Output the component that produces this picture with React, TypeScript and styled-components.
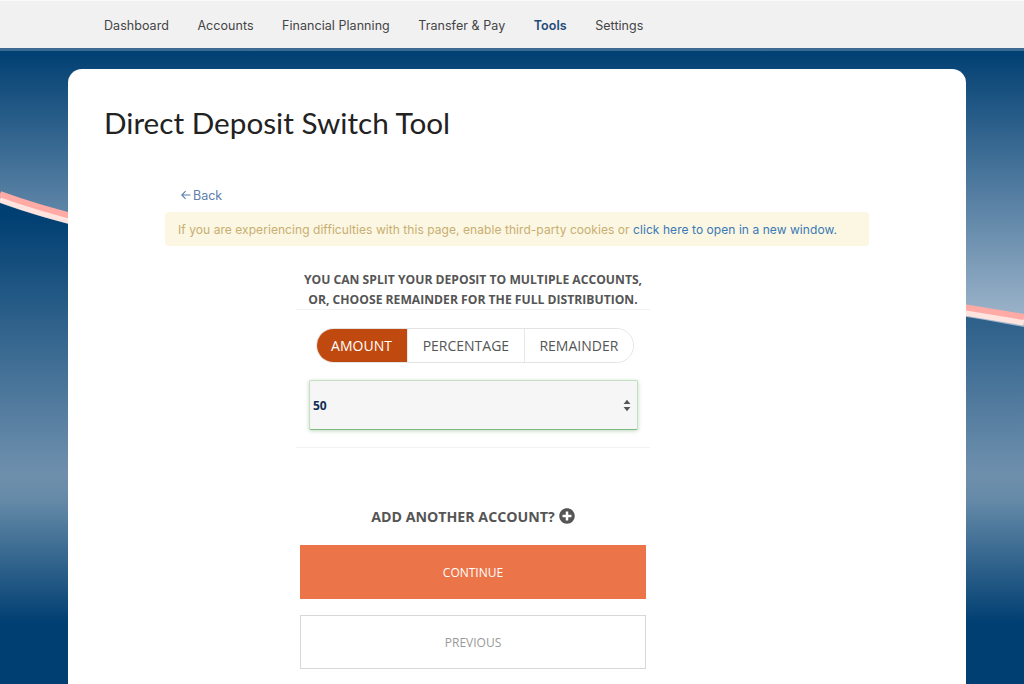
import React from "react";
import styled, { createGlobalStyle } from "styled-components";
import { FaPlusCircle } from "react-icons/fa";

const navItems = ["Dashboard", "Accounts", "Financial Planning", "Transfer & Pay", "Tools", "Settings"];
const modes = ["AMOUNT", "PERCENTAGE", "REMAINDER"];

const App = () => {
  return (
    <Page>
      <GlobalStyle />
      <Backdrop viewBox="0 0 1024 684" preserveAspectRatio="none" aria-hidden="true">
        <defs>
          <linearGradient id="sky" gradientUnits="userSpaceOnUse" x1="0" y1="50" x2="0" y2="330">
            <stop offset="0" stopColor="#003f72" />
            <stop offset="1" stopColor="#a3b9ce" />
          </linearGradient>
          <linearGradient id="sea" gradientUnits="userSpaceOnUse" x1="0" y1="215" x2="0" y2="640">
            <stop offset="0" stopColor="#003f72" />
            <stop offset="0.56" stopColor="#668aa9" />
            <stop offset="0.61" stopColor="#6e8fac" />
            <stop offset="0.67" stopColor="#658aa8" />
            <stop offset="0.96" stopColor="#003f72" />
            <stop offset="1" stopColor="#003f72" />
          </linearGradient>
        </defs>
        <rect width="1024" height="684" fill="url(#sky)" />
        <path d="M0 203 C100 240 300 275 500 280 S850 295 1024 327 V684 H0 Z" fill="url(#sea)" />
        <path d="M0 199 C100 236 300 271 500 276 S850 291 1024 322" fill="none" stroke="#ffe3df" strokeWidth="7" />
        <path d="M0 194 C100 231 300 266 500 271 S850 286 1024 317" fill="none" stroke="#ffaaa5" strokeWidth="6" />
      </Backdrop>

      <Nav>
        {navItems.map((item) => (
          <NavLink key={item} active={item === "Tools"}>
            {item}
          </NavLink>
        ))}
      </Nav>

      <Card>
        <Title>Direct Deposit Switch Tool</Title>

        <Content>
          <Back>
            <svg width="10" height="10" viewBox="0 0 10 10" fill="none" stroke="currentColor" strokeWidth="1.1">
              <path d="M9.5 5H.8M4.6 1.2.8 5l3.8 3.8" />
            </svg>
            Back
          </Back>

          <Alert>
            If you are experiencing difficulties with this page, enable third-party cookies or{" "}
            <AlertLink>click here to open in a new window.</AlertLink>
          </Alert>

          <Form>
            <Heading>
              You can split your deposit to multiple accounts,
              <br />
              or, choose remainder for the full distribution.
            </Heading>
            <Rule />

            <Segments>
              {modes.map((mode) => (
                <Segment key={mode} active={mode === "AMOUNT"}>
                  {mode}
                </Segment>
              ))}
            </Segments>

            <AmountField>
              <span>50</span>
              <svg width="8" height="13" viewBox="0 0 8 13" fill="#555">
                <path d="M4 .8 7.4 5H.6zM4 12.2.6 8h6.8z" />
              </svg>
            </AmountField>
            <Rule />

            <AddAccount>
              Add another account?
              <FaPlusCircle size={16} color="#555" />
            </AddAccount>

            <ContinueButton>CONTINUE</ContinueButton>
            <PreviousButton>PREVIOUS</PreviousButton>
          </Form>
        </Content>
      </Card>
    </Page>
  );
};

const GlobalStyle = createGlobalStyle`
  html, body {
    margin: 0;
    padding: 0;
    background: #003f72;
  }
  * {
    box-sizing: border-box;
  }
`;

const Page = styled.div`
  position: relative;
  height: 684px;
  overflow: hidden;
`;

const Backdrop = styled.svg`
  position: absolute;
  top: 0;
  left: 0;
  width: 100%;
  height: 100%;
`;

const Nav = styled.nav`
  position: relative;
  display: flex;
  align-items: center;
  gap: 28.5px;
  height: 51px;
  padding: 1px 0 0 104px;
  background: #f1f1f2;
  border-top: 1px solid #fafafa;
  border-bottom: 3px solid #3d6a90;
`;

const NavLink = styled.a<{ active?: boolean }>`
  font-family: Inter, sans-serif;
  font-size: 12.5px;
  font-weight: ${(p) => (p.active ? 600 : 400)};
  letter-spacing: 0.05px;
  color: ${(p) => (p.active ? "#1f4a78" : "#444")};
`;

const Card = styled.main`
  position: relative;
  width: 898px;
  height: 640px;
  margin: 18px 0 0 68px;
  padding: 31px 0 0 36px;
  background: #fff;
  border-radius: 14px;
`;

const Title = styled.h1`
  margin: 0;
  font-family: Lato, sans-serif;
  font-size: 29.7px;
  line-height: 46px;
  font-weight: 400;
  color: #222;
`;

const Content = styled.div`
  width: 704px;
  margin: 39px 0 0 61px;
`;

const Back = styled.a`
  display: flex;
  align-items: center;
  gap: 2px;
  height: 20px;
  margin-left: 16px;
  font-family: Inter, sans-serif;
  font-size: 12.5px;
  color: #5c80ab;
`;

const Alert = styled.div`
  height: 34px;
  margin-top: 7px;
  padding-left: 13px;
  font-family: Inter, sans-serif;
  font-size: 12px;
  line-height: 35px;
  letter-spacing: 0.06px;
  white-space: nowrap;
  color: #c9ae70;
  background: #fbf7e3;
  border-radius: 4px;
`;

const AlertLink = styled.a`
  color: #3a78b5;
`;

const Form = styled.div`
  display: flex;
  flex-direction: column;
  align-items: center;
  width: 354px;
  margin: 24px 0 0 131px;
`;

const Heading = styled.h2`
  margin: 0 0 -1px;
  font-family: "Open Sans", sans-serif;
  font-size: 12.15px;
  line-height: 20px;
  font-weight: 700;
  text-align: center;
  text-transform: uppercase;
  white-space: nowrap;
  color: #555;
`;

const Rule = styled.div`
  align-self: stretch;
  height: 1px;
  background: #f2f2f2;
`;

const Segments = styled.div`
  display: flex;
  width: 318px;
  height: 35px;
  margin: 18px 0 0 4px;
  border: 1px solid #e3e3e3;
  border-radius: 18px;
  overflow: hidden;
`;

const Segment = styled.div<{ active?: boolean }>`
  display: flex;
  flex: ${(p) => (p.active ? "0 0 91px" : "1 1 auto")};
  align-items: center;
  justify-content: center;
  margin: ${(p) => (p.active ? "-1px 0 -1px -1px" : "0")};
  font-family: "Open Sans", sans-serif;
  font-size: 14px;
  color: ${(p) => (p.active ? "#fff" : "#555")};
  background: ${(p) => (p.active ? "#c0490f" : "#fff")};

  & + & {
    border-left: 1px solid ${(p) => (p.active ? "#c0490f" : "#e8e8e8")};
  }
`;

const AmountField = styled.div`
  display: flex;
  align-items: center;
  justify-content: space-between;
  width: 329px;
  height: 50px;
  margin: 17px 0 17px 1px;
  padding: 0 6px 0 3px;
  font-family: "Open Sans", sans-serif;
  font-size: 12px;
  font-weight: 700;
  color: #0f2f55;
  background: #f6f6f6;
  border: 1px solid #c4e0c0;
  border-bottom-color: #7fb87f;
  border-radius: 2px;
  box-shadow: 0 1px 4px rgba(80, 140, 80, 0.35);
`;

const AddAccount = styled.div`
  display: flex;
  align-items: center;
  gap: 4px;
  margin-top: 57px;
  height: 22px;
  font-family: "Open Sans", sans-serif;
  font-size: 14.2px;
  font-weight: 700;
  text-transform: uppercase;
  color: #555;
`;

const ContinueButton = styled.button`
  width: 346px;
  height: 54px;
  margin-top: 18px;
  font-family: "Open Sans", sans-serif;
  font-size: 12px;
  color: #fff;
  background: #ec7449;
  border: 0;
`;

const PreviousButton = styled.button`
  width: 346px;
  height: 54px;
  margin-top: 16px;
  font-family: "Open Sans", sans-serif;
  font-size: 12px;
  color: #999;
  background: #fff;
  border: 1px solid #d8d8d8;
`;

export default App;
